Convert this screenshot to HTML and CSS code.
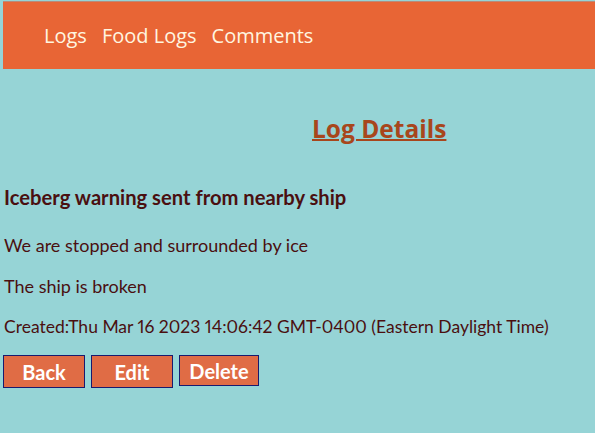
FILE: index.html
```html
<!DOCTYPE html>
<html>
<head>
<meta charset="utf-8">
<link rel="stylesheet" href="styles.css">
</head>
<body>
<nav class="navbar">
  <a class="nav-link" href="#">Logs</a>
  <a class="nav-link" href="#">Food Logs</a>
  <a class="nav-link" href="#">Comments</a>
</nav>
<main class="content">
  <h1 class="title"><a href="#">Log Details</a></h1>
  <h3 class="log-title">Iceberg warning sent from nearby ship</h3>
  <p class="log-text">We are stopped and surrounded by ice</p>
  <p class="log-text">The ship is broken</p>
  <p class="log-text log-date">Created:Thu Mar 16 2023 14:06:42 GMT-0400 (Eastern Daylight Time)</p>
  <div class="actions">
    <button class="btn">Back</button>
    <button class="btn">Edit</button>
    <button class="btn btn-short">Delete</button>
  </div>
</main>
</body>
</html>
```
FILE: styles.css
```css
html, body {
  margin: 0;
  padding: 0;
  background: #96d4d6;
}
body {
  font-family: "Lato", "Open Sans", sans-serif;
  color: #4a0f10;
  font-variant-numeric: proportional-nums;
}
.navbar {
  margin: 1px 0 0 3px;
  height: 68px;
  background: #e86535;
  border-top: 1px solid #b98a78;
  box-sizing: border-box;
  display: flex;
  align-items: center;
  padding-left: 41px;
  gap: 15px;
}
.nav-link {
  font-family: "Open Sans", sans-serif;
  font-size: 20px;
  color: #fff6e0;
  text-decoration: none;
}
.content {
  padding: 0 4px;
}
.title {
  margin: 44px 0 0 0;
  padding-left: 308px;
  font-family: "Open Sans", sans-serif;
  font-size: 24.5px;
  font-weight: 700;
  line-height: 32px;
}
.title a {
  color: #a8461c;
  text-decoration: underline;
  text-decoration-thickness: 2px;
}
.log-title {
  margin: 40px 0 0 0;
  font-size: 20.2px;
  font-weight: 700;
  line-height: 24px;
}
.log-text {
  margin: 17px 0 0 0;
  font-size: 18px;
  line-height: 24px;
}
.log-title + .log-text {
  margin-top: 24px;
}
.log-date {
  font-size: 17.5px;
}
.actions {
  margin: 16px 0 0 -1px;
  display: flex;
  gap: 6px;
  align-items: flex-start;
}
.btn {
  width: 82px;
  height: 33px;
  background: #e06c45;
  border: 1px solid #1a1a6e;
  color: #ffffff;
  font-family: "Lato", sans-serif;
  font-size: 20px;
  font-weight: 700;
  padding: 0;
}
.btn-short {
  width: 80px;
  height: 31px;
}
```
